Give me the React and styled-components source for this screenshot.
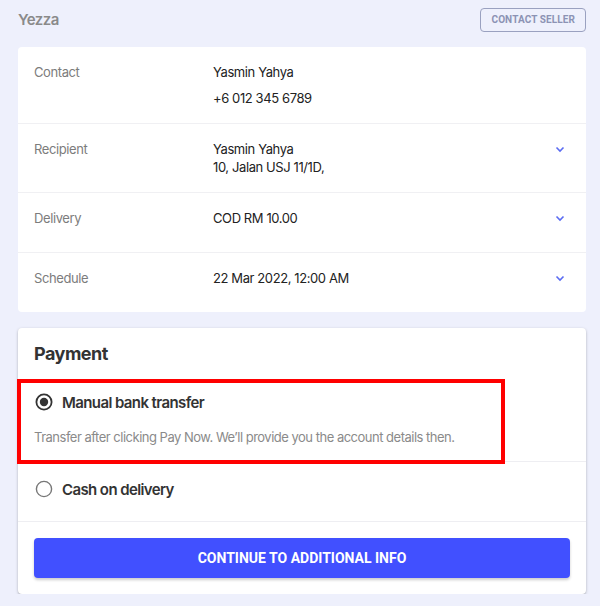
import React from 'react';
import styled, { createGlobalStyle } from 'styled-components';

const GlobalStyle = createGlobalStyle`
  html, body {
    margin: 0;
    padding: 0;
    background: #eef0fc;
    font-family: Inter, "Noto Sans", sans-serif;
  }
  * {
    box-sizing: border-box;
  }
`;

const Page = styled.div`
  padding: 0 14px 0 18px;
  display: flex;
  flex-direction: column;
`;

const TopBar = styled.div`
  height: 39px;
  margin-bottom: 8px;
  display: flex;
  align-items: center;
  justify-content: space-between;
`;

const ShopName = styled.div`
  font-size: 15px;
  font-weight: 600;
  letter-spacing: -0.5px;
  color: #8a8a8a;
`;

const OutlineButton = styled.button`
  height: 24px;
  padding: 0 10px;
  border: 1px solid #9aa1c0;
  border-radius: 4px;
  background: transparent;
  color: #8c93b4;
  font-family: Roboto, Inter, sans-serif;
  font-size: 10px;
  font-weight: 700;
  text-transform: uppercase;
  letter-spacing: 0.1px;
`;

const Card = styled.div`
  background: #fff;
  border-radius: 4px;
  box-shadow: ${(p) => (p.$raised ? '0 1px 3px rgba(0,0,0,0.25), 0 1px 1px rgba(0,0,0,0.08)' : 'none')};
  margin-bottom: ${(p) => p.$gap || 0}px;
`;

const InfoRow = styled.div`
  display: grid;
  grid-template-columns: 179px 1fr 28px;
  padding: 16px 12px 16px 16px;
  min-height: 60px;
  border-top: ${(p) => (p.$first ? 'none' : '1px solid #f0f0f3')};
  font-size: 13px;
  line-height: 18px;
  letter-spacing: -0.4px;
`;

const Label = styled.div`
  color: #7c7c7c;
`;

const Values = styled.div`
  display: flex;
  flex-direction: column;
  gap: ${(p) => p.$gap || 0}px;
  color: #222;
`;

const Chevron = styled.div`
  display: flex;
  justify-content: center;
  padding-top: 6px;
  height: 18px;
`;

const CardTitle = styled.h2`
  margin: 0;
  padding: 14px 16px 9px;
  font-size: 18px;
  line-height: 24px;
  font-weight: 700;
  letter-spacing: -0.5px;
  color: #333;
`;

const Option = styled.div`
  position: relative;
  padding: 17px 16px 15px;
  min-height: 60px;
  border-bottom: 1px solid #eeeef2;
`;

const OptionHead = styled.div`
  display: flex;
  align-items: center;
  gap: 8px;
  height: 20px;
  font-size: 15px;
  font-weight: 600;
  letter-spacing: -0.6px;
  color: #333;
`;

const OptionNote = styled.div`
  margin-top: 16px;
  font-size: 13px;
  line-height: 18px;
  letter-spacing: -0.5px;
  color: #8a8a8a;
`;

const Highlight = styled.div`
  position: absolute;
  top: 4px;
  left: -1px;
  width: 488px;
  height: 85px;
  border: 4px solid #ff0000;
  pointer-events: none;
`;

const Footer = styled.div`
  padding: 16px;
`;

const PrimaryButton = styled.button`
  width: 100%;
  height: 40px;
  border: none;
  border-radius: 4px;
  background: #4150ff;
  color: #fff;
  font-family: Roboto, Inter, sans-serif;
  font-size: 14px;
  font-weight: 700;
  text-transform: uppercase;
  box-shadow: 0 2px 3px rgba(0, 0, 0, 0.2);
`;

const ChevronIcon = () => (
  <svg width="10" height="7" viewBox="0 0 10 7">
    <path d="M1.5 1.5 L5 5 L8.5 1.5" fill="none" stroke="#5b6cf2" strokeWidth="1.6" />
  </svg>
);

const Radio = ({ checked }) => (
  <svg width="20" height="20" viewBox="0 0 20 20">
    <circle cx="10" cy="10" r="7.6" fill="none" stroke={checked ? '#333' : '#777'} strokeWidth={checked ? 1.8 : 1.4} />
    {checked && <circle cx="10" cy="10" r="4.2" fill="#333" />}
  </svg>
);

const details = [
  { label: 'Contact', lines: ['Yasmin Yahya', '+6 012 345 6789'], gap: 8 },
  { label: 'Recipient', lines: ['Yasmin Yahya', '10, Jalan USJ 11/1D,'], more: true },
  { label: 'Delivery', lines: ['COD RM 10.00'], more: true },
  { label: 'Schedule', lines: ['22 Mar 2022, 12:00 AM'], more: true },
];

export default function App() {
  return (
    <>
      <GlobalStyle />
      <Page>
        <TopBar>
          <ShopName>Yezza</ShopName>
          <OutlineButton>Contact Seller</OutlineButton>
        </TopBar>

        <Card $gap={16}>
          {details.map((d, i) => (
            <InfoRow key={d.label} $first={i === 0}>
              <Label>{d.label}</Label>
              <Values $gap={d.gap}>
                {d.lines.map((l) => (
                  <div key={l}>{l}</div>
                ))}
              </Values>
              <Chevron>{d.more && <ChevronIcon />}</Chevron>
            </InfoRow>
          ))}
        </Card>

        <Card $raised>
          <CardTitle>Payment</CardTitle>
          <Option>
            <OptionHead>
              <Radio checked />
              Manual bank transfer
            </OptionHead>
            <OptionNote>Transfer after clicking Pay Now. We’ll provide you the account details then.</OptionNote>
            <Highlight />
          </Option>
          <Option>
            <OptionHead>
              <Radio />
              Cash on delivery
            </OptionHead>
          </Option>
          <Footer>
            <PrimaryButton>Continue to additional info</PrimaryButton>
          </Footer>
        </Card>
      </Page>
    </>
  );
}
